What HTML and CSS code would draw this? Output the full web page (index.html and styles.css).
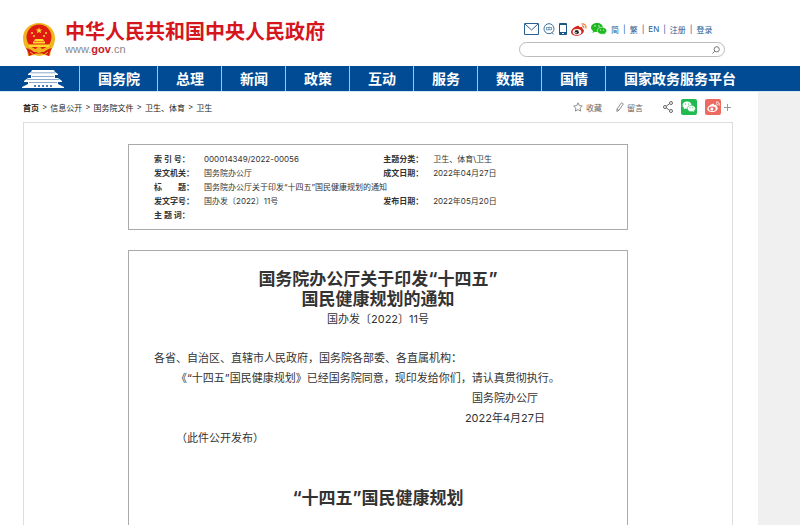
FILE: index.html
```html
<!DOCTYPE html>
<html lang="zh-CN">

<head>
    <meta charset="UTF-8">
    <meta name="viewport" content="width=device-width, initial-scale=1.0">
    <title>国务院办公厅关于印发“十四五”国民健康规划的通知</title>
    <link rel="stylesheet" href="styles.css">
</head>

<body>
    <header class="header">
        <div class="brand">
            <!-- 国徽 -->
            <svg class="emblem" viewBox="0 0 32 34" aria-hidden="true">
                <path fill="#f0b51f" d="M16 0C7 0 0 6.500 0 15c0 5 1.500 9 4 12l1 6 6-1 5 1 5-1 6 1 1-6c2.500-3 4-7 4-12C32 6.500 25 0 16 0z"/>
                <circle cx="16" cy="14" r="12.500" fill="#e01b12"/>
                <path fill="#ffd92e" d="M16 4.500l.9 2.100h2.300l-1.800 1.400.7 2.200-2.100-1.300-2.100 1.300.7-2.200-1.800-1.400h2.300z"/>
                <g fill="#ffd92e">
                    <circle cx="9" cy="10" r="1"/><circle cx="23" cy="10" r="1"/>
                    <circle cx="11" cy="13" r="1"/><circle cx="21" cy="13" r="1"/>
                    <path d="M12 16h8l1 2h-10zM10 18.500h12v2H10zM6 21.500h20v2.500H6z"/>
                </g>
                <path fill="#d81b12" d="M3 25c4 1 6 2 8 4h10c2-2 4-3 8-4l-2 4-1 4-5-2h-10l-5 2-1-4z"/>
                <circle cx="16" cy="27" r="3" fill="#f0b51f"/>
                <path fill="none" stroke="#f6c42c" d="M7 29l4 3M25 29l-4 3M12 31h8"/>
            </svg>
            <div>
                <h1 class="site-name">中华人民共和国中央人民政府</h1>
                <p class="site-url">www.<b>gov</b>.cn</p>
            </div>
        </div>

        <div class="tools">
            <div class="tool-links">
                <a href="#" aria-label="邮箱">
                    <svg width="15" height="12" viewBox="0 0 15 12" fill="none" stroke="#2b6294"><path d="M.5.5h14v11H.5zM1 1l6.500 6L14 1"/></svg>
                </a>
                <a href="#" aria-label="互动">
                    <svg width="12" height="12" viewBox="0 0 12 12" fill="none" stroke="#3a709d"><circle cx="6" cy="5.700" r="5"/><path d="M9 9.500l1.500 1.800"/><path d="M3.500 4.500h5M3.500 6.800h5M3.500 4.500v2.300M6 4.500v2.300M8.500 4.500v2.300" stroke-width=".7"/></svg>
                </a>
                <a href="#" aria-label="客户端">
                    <svg width="8" height="12" viewBox="0 0 8 12"><rect width="8" height="12" rx="1" fill="#1d5587"/><path fill="#fff" d="M1 2h6v7H1zM3 10h2v1H3z"/></svg>
                </a>
                <a href="#" aria-label="微博">
                    <svg width="16" height="13" viewBox="0 0 16 13">
                        <path fill="#d3261d" d="M6 3c1.500-.7 2.600-.2 2.300 1.200C10.500 3.500 12 4 11.500 6c1.300.5 1.700 1.500 1.200 2.800C12 11 9 12.800 5.700 12.800 2.500 12.800 0 11.300 0 9 0 6.800 3 4 6 3z"/>
                        <ellipse cx="6" cy="9" rx="4.400" ry="2.900" fill="#fff"/>
                        <circle cx="5.700" cy="9.200" r="2.100" fill="#222"/><circle cx="5" cy="9.700" r=".8" fill="#fff"/>
                        <path fill="none" stroke="#ee7a2c" stroke-width="1.200" d="M10.500 1c3-.5 5 1.500 4.300 4.500M10.800 3c1.500-.2 2.300.6 2 2"/>
                    </svg>
                </a>
                <a href="#" aria-label="微信">
                    <svg width="16" height="12" viewBox="0 0 16 12">
                        <path fill="#1fb81f" d="M6 0c3.300 0 6 2 6 4.500S9.300 9 6 9c-.7 0-1.300-.1-2-.3L1.500 10l.6-2C.8 7.200 0 5.900 0 4.500 0 2 2.700 0 6 0z"/>
                        <path fill="#1fb81f" stroke="#fff" stroke-width=".6" d="M11 4.200c2.700 0 4.700 1.500 4.700 3.600 0 1-.6 2-1.600 2.700l.4 1.300-1.700-.8c-3.500.8-6.500-.8-6.500-3.200 0-2.100 2-3.600 4.700-3.600z"/>
                        <g fill="#fff"><circle cx="4" cy="3" r=".7"/><circle cx="8" cy="3" r=".7"/><circle cx="9.500" cy="7" r=".6"/><circle cx="12.500" cy="7" r=".6"/></g>
                    </svg>
                </a>
                <div class="lang">
                    <a href="#">简</a><span>|</span><a href="#">繁</a><span>|</span><a href="#">EN</a><span>|</span><a href="#">注册</a><span>|</span><a href="#">登录</a>
                </div>
            </div>
            <form class="search">
                <input type="text" aria-label="搜索">
                <button type="submit" aria-label="搜索">
                    <svg width="8" height="8" viewBox="0 0 8 8" fill="none" stroke="#777"><circle cx="4.700" cy="3.300" r="2.600"/><path d="M2.800 5.200L.5 7.500"/></svg>
                </button>
            </form>
        </div>
    </header>

    <nav class="nav">
        <a class="nav-home" href="#" aria-label="首页">
            <svg width="42" height="18" viewBox="0 0 42 18" aria-hidden="true">
                <g fill="#fff">
                    <path d="M10 0h22l1 2 3 2v1H6V4l3-2z"/>
                    <path d="M9 5h24v3H9z"/>
                    <path d="M6 8h30l4 3v1H2v-1z"/>
                    <path d="M6 12h30v2l6 3v1H0v-1l6-3z"/>
                </g>
                <path stroke="#6d95c2" stroke-width=".8" d="M9 2.800h24M10 6.500h22M5 9.500h32M7 12.500h28"/>
                <path fill="#4d7fb5" d="M12 15h2v2h-2zM16 15h2v2h-2zM20 15h2v2h-2zM24 15h2v2h-2zM28 15h2v2h-2z"/>
            </svg>
        </a>
        <a href="#">国务院</a>
        <a href="#">总理</a>
        <a href="#">新闻</a>
        <a href="#">政策</a>
        <a href="#">互动</a>
        <a href="#">服务</a>
        <a href="#">数据</a>
        <a href="#">国情</a>
        <a href="#">国家政务服务平台</a>
    </nav>

    <main class="page">
        <div class="bar">
            <div class="crumbs">
                <a href="#"><b>首页</b></a><span>&gt;</span><a href="#">信息公开</a><span>&gt;</span><a href="#">国务院文件</a><span>&gt;</span><a href="#">卫生、体育</a><span>&gt;</span><a href="#">卫生</a>
            </div>
            <div class="actions">
                <button type="button">
                    <svg width="10" height="10" viewBox="0 0 10 10" fill="none" stroke="#777" stroke-width=".8"><path d="M5 .8l1.300 2.800 3 .4-2.200 2.100.5 3L5 7.600 2.400 9.100l.5-3L.7 4l3-.4z"/></svg>
                    收藏
                </button>
                <button type="button">
                    <svg width="8" height="10" viewBox="0 0 8 10" fill="none" stroke="#777" stroke-width=".8"><path d="M5.500.7l1.800 1.200L3 8.300.8 9.400 1 7zM1 7l2 1.300"/></svg>
                    留言
                </button>
                <div class="share">
                    <button type="button" aria-label="分享">
                        <svg width="10" height="12" viewBox="0 0 10 12" fill="none" stroke="#666"><path d="M3.200 5.200l3.400-2.500M3.200 6.800l3.400 2.500"/><circle cx="2" cy="6" r="1.500"/><circle cx="8" cy="2" r="1.500"/><circle cx="8" cy="10" r="1.500"/></svg>
                    </button>
                    <button type="button" class="square wechat" aria-label="分享到微信">
                        <svg width="14" height="12" viewBox="0 0 14 12">
                            <path fill="#fff" d="M5 .5c2.500 0 4.500 1.600 4.500 3.600S7.500 7.800 5 7.800l-1.500-.2-1.800 1 .4-1.600C1.100 6.300.5 5.300.5 4.100.5 2.100 2.500.5 5 .5z"/>
                            <path fill="#fff" stroke="#1fba50" stroke-width=".6" d="M9.300 4.300c2.300 0 4.100 1.400 4.100 3.200 0 1-.5 1.900-1.400 2.500l.3 1.400-1.500-.8c-3 .7-5.500-.9-5.500-3.100 0-1.800 1.700-3.200 4-3.200z"/>
                            <g fill="#1fba50"><circle cx="3.500" cy="3" r=".6"/><circle cx="6.500" cy="3" r=".6"/><circle cx="8" cy="6.800" r=".5"/><circle cx="10.700" cy="6.800" r=".5"/></g>
                        </svg>
                    </button>
                    <button type="button" class="square weibo" aria-label="分享到微博">
                        <svg width="13" height="12" viewBox="0 0 13 12">
                            <path fill="#fff" d="M5 3c1.300-.7 2.300-.2 2 1 1.800-.5 3 0 2.600 1.400 1.100.5 1.400 1.400 1 2.500C10 9.800 7.500 11 4.900 11 2.200 11 .3 9.800.3 8 .3 6.200 2.500 4 5 3z"/>
                            <ellipse cx="5.200" cy="7.700" rx="3.500" ry="2.300" fill="#ec6a5f"/>
                            <circle cx="4.900" cy="7.900" r="1.500" fill="#fff"/>
                            <path fill="none" stroke="#fff" d="M9 1c2.400-.3 3.700 1.300 3.200 3.500M9 2.800c1-.1 1.600.5 1.400 1.400"/>
                        </svg>
                    </button>
                    <button type="button" class="more" aria-label="更多">
                        <svg width="7" height="7" viewBox="0 0 7 7" stroke="#999"><path d="M0 3.500h7M3.500 0v7"/></svg>
                    </button>
                </div>
            </div>
        </div>

        <div class="frame">
            <!-- 公文信息 -->
            <section class="meta">
                <table>
                    <tr>
                        <th scope="row">索 引 号：</th>
                        <td class="wide">000014349/2022-00056</td>
                        <th scope="row">主题分类：</th>
                        <td>卫生、体育\卫生</td>
                    </tr>
                    <tr>
                        <th scope="row">发文机关：</th>
                        <td>国务院办公厅</td>
                        <th scope="row">成文日期：</th>
                        <td>2022年04月27日</td>
                    </tr>
                    <tr>
                        <th scope="row">标　　题：</th>
                        <td colspan="3">国务院办公厅关于印发“十四五”国民健康规划的通知</td>
                    </tr>
                    <tr>
                        <th scope="row">发文字号：</th>
                        <td>国办发〔2022〕11号</td>
                        <th scope="row">发布日期：</th>
                        <td>2022年05月20日</td>
                    </tr>
                    <tr>
                        <th scope="row">主 题 词：</th>
                        <td colspan="3"></td>
                    </tr>
                </table>
            </section>

            <!-- 正文 -->
            <article class="article">
                <h2>国务院办公厅关于印发“十四五”<br>国民健康规划的通知</h2>
                <p class="doc-no">国办发〔2022〕11号</p>
                <p>各省、自治区、直辖市人民政府，国务院各部委、各直属机构：</p>
                <p class="indent">《“十四五”国民健康规划》已经国务院同意，现印发给你们，请认真贯彻执行。</p>
                <div class="sign">
                    <p>国务院办公厅</p>
                    <p>2022年4月27日</p>
                </div>
                <p class="indent">（此件公开发布）</p>
                <h2 class="plan-title">“十四五”国民健康规划</h2>
            </article>
        </div>
    </main>
</body>

</html>
```

FILE: styles.css
```css
* {
    box-sizing: border-box;
}

body {
    margin: 0;
    min-height: 100vh;
    display: flex;
    flex-direction: column;
    background: #f0f0f0;
    color: #333;
    font-family: Inter, "Noto Sans CJK SC", sans-serif;
    font-size: 8px;
}

h1,
h2,
p {
    margin: 0;
}

a {
    color: inherit;
    text-decoration: none;
}

button {
    padding: 0;
    border: none;
    background: none;
    color: inherit;
    font: inherit;
    cursor: pointer;
}

svg {
    display: block;
    flex: none;
}

/* 页头 */
.header {
    display: flex;
    justify-content: space-between;
    height: 66px;
    padding: 20px 75px 0 23px;
    background: #fff;
}

.brand {
    display: flex;
    gap: 10px;
}

.emblem {
    width: 32px;
    height: 34px;
    margin-top: 3px;
}

.site-name {
    font-size: 20px;
    line-height: 24px;
    color: #d5161d;
}

.site-url {
    font-family: "Liberation Sans", sans-serif;
    font-size: 11px;
    line-height: 11px;
    color: #888;
}

.site-url b {
    color: #c8202a;
}

.tools {
    width: 206px;
}

.tool-links {
    display: flex;
    align-items: center;
    gap: 4px;
    height: 18px;
    padding-left: 5px;
    color: #1c5a96;
}

.lang {
    display: flex;
    gap: 4px;
}

.search {
    display: flex;
    align-items: center;
    height: 15px;
    margin-top: 4px;
    padding: 0 4px 0 8px;
    border: 1px solid #bbb;
    border-radius: 8px;
}

.search input {
    flex: 1;
    min-width: 0;
    padding: 0;
    border: none;
    outline: none;
    background: none;
    font: inherit;
}

/* 导航 */
.nav {
    display: flex;
    height: 26px;
    background: #004b93;
    border-bottom: 1px solid #d5e8f2;
    color: #fff;
    font-size: 14px;
    font-weight: bold;
    line-height: 25px;
    white-space: nowrap;
}

.nav a {
    padding: 0 17px 0 18px;
    border-right: 1px solid #a9c4de;
}

.nav a:last-child {
    border-right: none;
}

.nav .nav-home {
    padding: 4px 15px 0 22px;
}

/* 内容区 */
.page {
    flex: 1;
    display: flex;
    flex-direction: column;
    margin-right: 42px;
    padding: 0 25px 0 23px;
    background: #fff;
}

.bar {
    display: flex;
    justify-content: space-between;
    align-items: center;
    height: 30px;
}

.crumbs {
    display: flex;
    gap: 3px;
    color: #222;
}

.actions {
    display: flex;
    gap: 14px;
    padding-right: 2px;
    color: #666;
}

.actions button {
    display: flex;
    align-items: center;
    gap: 3px;
}

.share {
    display: flex;
    align-items: center;
    gap: 8px;
    margin-left: 6px;
}

.actions .square {
    justify-content: center;
    width: 16px;
    height: 16px;
    border-radius: 2px;
}

.wechat {
    background: #1fba50;
}

.weibo {
    background: #ec6a5f;
}

.actions .more {
    margin-left: -5px;
}

.frame {
    flex: 1;
    display: flex;
    flex-direction: column;
    gap: 20px;
    padding: 21px 104px 0;
    border: 1px solid #ddd;
    border-bottom: none;
}

.meta {
    padding: 7px 25px;
    border: 1px solid #aaa;
}

.meta table {
    width: 100%;
    table-layout: fixed;
    border-collapse: collapse;
    line-height: 14px;
}

.meta th,
.meta td {
    height: 14px;
    padding: 0;
    text-align: left;
    white-space: nowrap;
}

.meta th {
    width: 50px;
}

.meta .wide {
    width: 40%;
}

.article {
    flex: 1;
    padding: 18px 25px 0;
    border: 1px solid #aaa;
    border-bottom: none;
    font-size: 11px;
    line-height: 20px;
}

.article h2 {
    font-size: 17px;
    line-height: 20px;
    text-align: center;
}

.doc-no {
    margin-bottom: 19px;
    text-align: center;
}

.indent {
    text-indent: 2em;
}

.sign {
    width: fit-content;
    margin-left: auto;
    padding-right: 57px;
    text-align: center;
}

.article .plan-title {
    margin-top: 40px;
}
```
